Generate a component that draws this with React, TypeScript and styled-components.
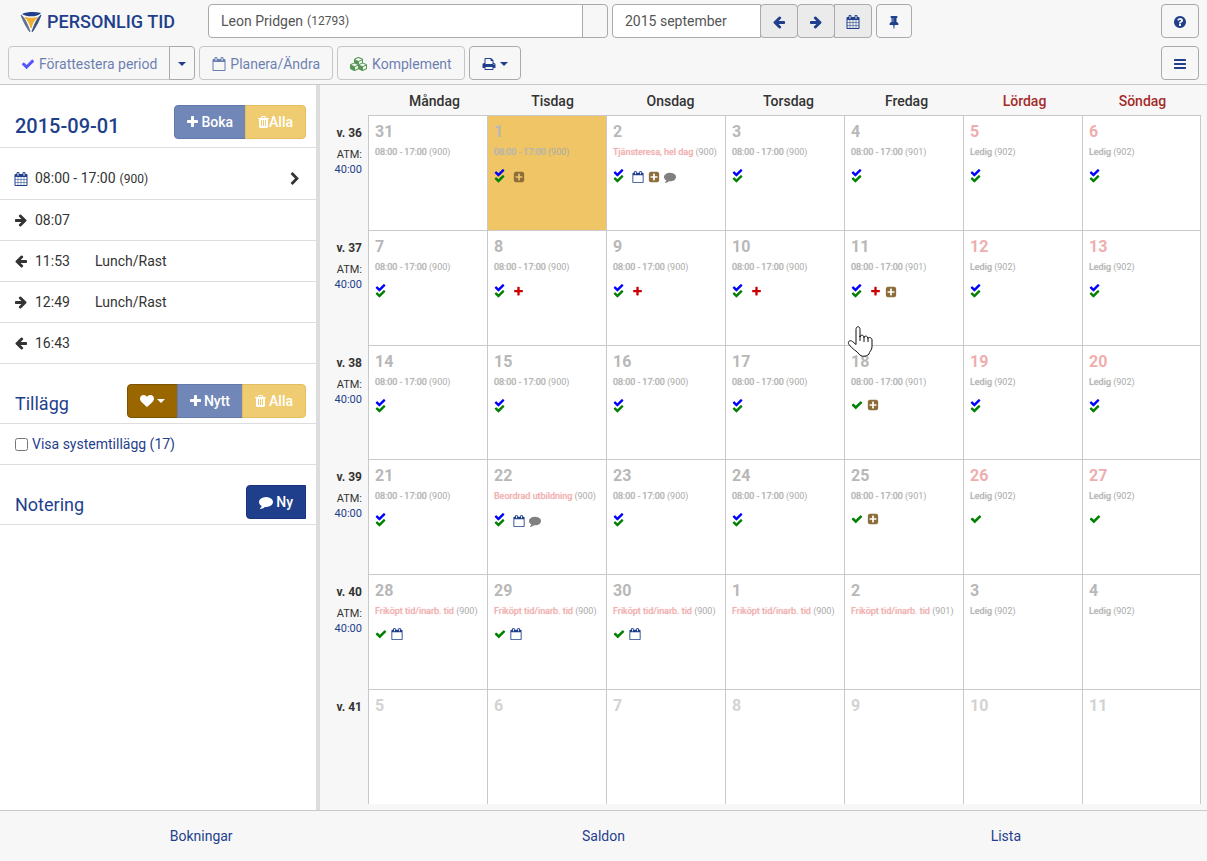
import React from "react";
import styled, { createGlobalStyle } from "styled-components";

const NAVY = "#1f3f8c";
const LINE = "#c9c9c9";

const GlobalStyle = createGlobalStyle`
  *, *::before, *::after { box-sizing: border-box; }
  body {
    margin: 0;
    background: #f7f7f7;
    color: #333;
    font: 14px/20px Roboto, "Liberation Sans", sans-serif;
  }
  button, input { font: inherit; color: inherit; }
  a { color: ${NAVY}; text-decoration: none; }
`;

/* ---------- icons ---------- */

const paths = {
  check:
    "M1671 566q0 40-28 68l-724 724-136 136q-28 28-68 28t-68-28l-136-136-362-362q-28-28-28-68t28-68l136-136q28-28 68-28t68 28l294 295 656-657q28-28 68-28t68 28l136 136q28 28 28 68z",
  arrowRight:
    "M1600 960q0 54-37 91l-651 651q-39 37-91 37-51 0-90-37l-75-75q-38-38-38-91t38-91l293-293h-704q-52 0-84.500-37.500t-32.500-90.500v-128q0-53 32.500-90.500t84.500-37.500h704l-293-294q-38-36-38-90t38-90l75-75q38-38 90-38 53 0 91 38l651 651q37 35 37 90z",
  arrowLeft:
    "M1664 896v128q0 53-32.500 90.500t-84.500 37.500h-704l293 294q38 36 38 90t-38 90l-75 76q-37 37-90 37-52 0-91-37l-651-652q-37-37-37-90 0-52 37-91l651-650q38-38 91-38 52 0 90 38l75 74q38 38 38 91t-38 91l-293 293h704q52 0 84.500 37.500t32.500 90.500z",
  calendar:
    "M192 1664h288v-288h-288v288zm352 0h320v-288h-320v288zm-352-352h288v-320h-288v320zm352 0h320v-320h-320v320zm-352-384h288v-288h-288v288zm736 736h320v-288h-320v288zm-384-736h320v-288h-320v288zm768 736h288v-288h-288v288zm-384-352h320v-320h-320v320zm-352-864v-288q0-13-9.500-22.500t-22.500-9.500h-64q-13 0-22.500 9.500t-9.500 22.500v288q0 13 9.500 22.500t22.500 9.500h64q13 0 22.500-9.500t9.500-22.500zm736 864h288v-320h-288v320zm-384-384h320v-288h-320v288zm384 0h288v-288h-288v288zm32-480v-288q0-13-9.500-22.500t-22.500-9.500h-64q-13 0-22.500 9.500t-9.500 22.500v288q0 13 9.500 22.500t22.500 9.500h64q13 0 22.500-9.500t9.500-22.500zm384-64v1280q0 52-38 90t-90 38h-1408q-52 0-90-38t-38-90v-1280q0-52 38-90t90-38h128v-96q0-66 47-113t113-47h64q66 0 113 47t47 113v96h384v-96q0-66 47-113t113-47h64q66 0 113 47t47 113v96h128q52 0 90 38t38 90z",
  calendarEmpty:
    "M192 1664h1408v-1024h-1408v1024zm384-1216v-288q0-13-9.500-22.500t-22.500-9.500h-64q-13 0-22.500 9.500t-9.500 22.500v288q0 13 9.500 22.500t22.500 9.500h64q13 0 22.500-9.500t9.500-22.500zm768 0v-288q0-13-9.500-22.500t-22.500-9.500h-64q-13 0-22.500 9.500t-9.500 22.500v288q0 13 9.500 22.500t22.500 9.500h64q13 0 22.500-9.500t9.500-22.500zm384-64v1280q0 52-38 90t-90 38h-1408q-52 0-90-38t-38-90v-1280q0-52 38-90t90-38h128v-96q0-66 47-113t113-47h64q66 0 113 47t47 113v96h384v-96q0-66 47-113t113-47h64q66 0 113 47t47 113v96h128q52 0 90 38t38 90z",
  plus:
    "M1600 736v192q0 40-28 68t-68 28h-416v416q0 40-28 68t-68 28h-192q-40 0-68-28t-28-68v-416h-416q-40 0-68-28t-28-68v-192q0-40 28-68t68-28h416v-416q0-40 28-68t68-28h192q40 0 68 28t28 68v416h416q40 0 68 28t28 68z",
  plusSquare:
    "M1408 960v-128q0-26-19-45t-45-19h-320v-320q0-26-19-45t-45-19h-128q-26 0-45 19t-19 45v320h-320q-26 0-45 19t-19 45v128q0 26 19 45t45 19h320v320q0 26 19 45t45 19h128q26 0 45-19t19-45v-320h320q26 0 45-19t19-45zm256-544v960q0 119-84.500 203.500t-203.500 84.500h-960q-119 0-203.500-84.500t-84.500-203.500v-960q0-119 84.500-203.500t203.500-84.500h960q119 0 203.500 84.500t84.500 203.500z",
  comment:
    "M1792 896q0 174-120 321.500t-326 233-450 85.500q-70 0-145-8-198 175-460 242-49 14-114 22-17 2-30.500-9t-17.500-29v-1q-3-4-.5-12t2-10 4.500-9.500l6-9 7-8.500 8-9q7-8 31-34.500t34.500-38 31-39.500 32.500-51 27-59 26-76q-157-89-247.500-220t-90.500-281q0-130 71-248.500t191-204.500 286-136.500 348-50.500q244 0 450 85.500t326 233 120 321.500z",
  trash:
    "M704 1376v-704q0-14-9-23t-23-9h-64q-14 0-23 9t-9 23v704q0 14 9 23t23 9h64q14 0 23-9t9-23zm256 0v-704q0-14-9-23t-23-9h-64q-14 0-23 9t-9 23v704q0 14 9 23t23 9h64q14 0 23-9t9-23zm256 0v-704q0-14-9-23t-23-9h-64q-14 0-23 9t-9 23v704q0 14 9 23t23 9h64q14 0 23-9t9-23zm-544-992h448l-48-117q-7-9-17-11h-317q-10 2-17 11zm928 32v64q0 14-9 23t-23 9h-96v948q0 83-47 143.500t-113 60.500h-832q-66 0-113-58.500t-47-141.500v-952h-96q-14 0-23-9t-9-23v-64q0-14 9-23t23-9h309l70-167q15-37 54-63t79-26h320q40 0 79 26t54 63l70 167h309q14 0 23 9t9 23z",
  chevronRight:
    "M1363 877l-742 742q-19 19-45 19t-45-19l-166-166q-19-19-19-45t19-45l531-531-531-531q-19-19-19-45t19-45l166-166q19-19 45-19t45 19l742 742q19 19 19 45t-19 45z",
  bars:
    "M1664 1344v128q0 26-19 45t-45 19h-1408q-26 0-45-19t-19-45v-128q0-26 19-45t45-19h1408q26 0 45 19t19 45zm0-512v128q0 26-19 45t-45 19h-1408q-26 0-45-19t-19-45v-128q0-26 19-45t45-19h1408q26 0 45 19t19 45zm0-512v128q0 26-19 45t-45 19h-1408q-26 0-45-19t-19-45v-128q0-26 19-45t45-19h1408q26 0 45 19t19 45z",
  question:
    "M1024 1376v-192q0-14-9-23t-23-9h-192q-14 0-23 9t-9 23v192q0 14 9 23t23 9h192q14 0 23-9t9-23zm256-672q0-88-55.500-163t-138.500-116-170-41q-243 0-371 213-15 24 8 42l132 100q7 6 19 6 16 0 25-12 53-68 86-92 34-24 86-24 48 0 85.500 26t37.500 59q0 38-20 61t-68 45q-63 28-115.500 86.500t-52.500 125.500v36q0 14 9 23t23 9h192q14 0 23-9t9-23q0-19 21.500-49.500t54.500-49.500q32-18 49-28.500t46-35 44.500-48 28-60.500 12.500-81zm384 192q0 209-103 385.500t-279.500 279.500-385.500 103-385.500-103-279.500-279.500-103-385.500 103-385.500 279.500-279.500 385.500-103 385.500 103 279.500 279.500 103 385.500z",
  print:
    "M448 1536h896v-256h-896v256zm0-640h896v-384h-160q-40 0-68-28t-28-68v-160h-640v640zm1152 64q0-26-19-45t-45-19-45 19-19 45 19 45 45 19 45-19 19-45zm128 0v416q0 13-9.500 22.500t-22.500 9.500h-224v160q0 40-28 68t-68 28h-960q-40 0-68-28t-28-68v-160h-224q-13 0-22.500-9.500t-9.500-22.500v-416q0-79 56.500-135.500t135.500-56.500h64v-544q0-40 28-68t68-28h672q40 0 88 20t76 48l152 152q28 28 48 76t20 88v256h64q79 0 135.500 56.500t56.500 135.500z",
  pin:
    "M800 864v-448q0-14-9-23t-23-9-23 9-9 23v448q0 14 9 23t23 9 23-9 9-23zm672 352q0 26-19 45t-45 19h-429l-51 483q-2 12-10.500 20.500t-20.500 8.500h-1q-27 0-32-27l-76-485h-404q-26 0-45-19t-19-45q0-123 78.500-221.500t177.500-98.500v-512q-52 0-90-38t-38-90 38-90 90-38h640q52 0 90 38t38 90-38 90-90 38v512q99 0 177.500 98.500t78.500 221.500z",
  heart:
    "M896 1664q-26 0-44-18l-624-602q-10-8-27.500-26t-55.500-65.500-68-97.500-53.500-121-23.500-138q0-220 127-344t351-124q62 0 126.500 21.500t120 58 95.500 68.500 76 68q36-36 76-68t95.500-68.500 120-58 126.500-21.500q224 0 351 124t127 344q0 221-229 450l-623 600q-18 18-44 18z",
  cubes:
    "M640 1632l384-192v-314l-384 164v342zm-64-454l404-173-404-173-404 173zm1088 454l384-192v-314l-384 164v342zm-64-454l404-173-404-173-404 173zm-448-293l384-165v-266l-384 164v267zm-64-379l441-189-441-189-441 189zm1088 518v416q0 36-19 67t-52 47l-448 224q-25 14-57 14t-57-14l-448-224q-4-2-7-4-2 2-7 4l-448 224q-25 14-57 14t-57-14l-448-224q-33-16-52-47t-19-67v-416q0-38 21.500-70t56.500-48l434-186v-400q0-38 21.500-70t56.500-48l448-192q23-10 50-10t50 10l448 192q35 16 56.500 48t21.500 70v400l434 186q36 16 57 48t21 70z",
};

type IconName = keyof typeof paths;

const Svg = styled.svg`
  display: block;
  flex: none;
  fill: currentColor;
`;

function Icon({ name, size = 14, narrow, color }: { name: IconName; size?: number; narrow?: boolean; color?: string }) {
  const wide = name === "cubes";
  const viewBox = wide ? "0 0 2304 1792" : narrow ? "192 0 1408 1792" : "0 0 1792 1792";
  return (
    <Svg
      width={wide ? size + 4 : narrow ? size - 3 : size}
      height={size}
      viewBox={viewBox}
      color={color}
      aria-hidden="true"
    >
      <path d={paths[name]} />
    </Svg>
  );
}

const Caret = styled.span`
  border: 4px solid transparent;
  border-top-color: currentColor;
  border-bottom: 0;
`;

const DoubleCheckBox = styled(Svg)`
  align-self: flex-start;
`;

function DoubleCheck() {
  return (
    <DoubleCheckBox width="15" height="15" viewBox="0 0 15 15" role="img" aria-label="Attesterad">
      <g transform="translate(0 -1) scale(0.0062)" fill="#00f">
        <path d={paths.check} />
      </g>
      <g transform="translate(0 5) scale(0.0062)" fill="green">
        <path d={paths.check} />
      </g>
    </DoubleCheckBox>
  );
}

/* ---------- header ---------- */

const Page = styled.div`
  min-height: 100vh;
  display: flex;
  flex-direction: column;
`;

const Header = styled.header`
  display: flex;
  flex-direction: column;
  gap: 8px;
  padding: 4px 8px;
  border-bottom: 1px solid ${LINE};
`;

const Bar = styled.div`
  display: flex;
  gap: 4px;
`;

const Logo = styled.h1`
  display: flex;
  align-items: center;
  gap: 5px;
  width: 196px;
  margin: 0;
  padding: 2px 0 0 12px;
  font-size: 18px;
  line-height: 32px;
  font-weight: 500;
  color: ${NAVY};
  white-space: nowrap;
`;

const Group = styled.div<{ $width?: string }>`
  display: flex;
  width: ${(p) => p.$width ?? "auto"};
  & > * { border-radius: 0; }
  & > * + * { margin-left: -1px; }
  & > :last-child { border-radius: 0 4px 4px 0; }
  & > :first-child { border-radius: 4px 0 0 4px; }
`;

const PersonField = styled.div`
  flex: 1;
  display: flex;
  align-items: center;
  height: 34px;
  padding: 0 12px;
  background: #fff;
  border: 1px solid #aaa;
  color: #555;
`;

const Field = styled.input`
  flex: 1;
  min-width: 0;
  height: 34px;
  padding: 0 12px;
  background: #fff;
  border: 1px solid #aaa;
  color: #555;
`;

const Button = styled.button<{ $shade?: boolean; $pad?: number; $muted?: boolean }>`
  display: flex;
  align-items: center;
  justify-content: center;
  gap: 4px;
  height: 34px;
  padding: 2px ${(p) => p.$pad ?? 12}px 0;
  background: ${(p) => (p.$shade ? "#ebebeb" : "#f7f7f7")};
  border: 1px solid ${(p) => (p.$muted ? "#c6c6c6" : "#aaa")};
  border-radius: 4px;
  color: ${NAVY};
  white-space: nowrap;
  & > * { opacity: ${(p) => (p.$muted ? 0.65 : 1)}; }
`;

const Spacer = styled.div`
  flex: 1;
`;

const Small = styled.small`
  margin-left: 4px;
  font-size: 12px;
`;

/* ---------- sidebar ---------- */

const Body = styled.div`
  flex: 1;
  display: flex;
`;

const Side = styled.aside`
  flex: none;
  width: 320px;
  background: #fff;
  border-right: 4px solid #ddd;
`;

const SideHead = styled.div<{ $bottom?: number }>`
  display: flex;
  justify-content: space-between;
  padding: 20px 10px ${(p) => p.$bottom ?? 5}px 15px;
  border-bottom: 1px solid #ddd;
`;

const SideTitle = styled.h2<{ $strong?: boolean }>`
  margin: 0;
  padding-top: ${(p) => (p.$strong ? 8 : 6)}px;
  font-size: ${(p) => (p.$strong ? 20 : 18)}px;
  line-height: ${(p) => (p.$strong ? 26 : 28)}px;
  font-weight: ${(p) => (p.$strong ? 500 : 400)};
  color: ${NAVY};
`;

const Action = styled.button<{ $bg: string; $edge: string; $gap?: number }>`
  display: flex;
  align-items: center;
  gap: ${(p) => p.$gap ?? 3}px;
  height: 34px;
  padding: 0 12px;
  background: ${(p) => p.$bg};
  border: 1px solid ${(p) => p.$edge};
  color: #fff;
  font-weight: 500;
`;

const SideRow = styled.div<{ $first?: boolean }>`
  display: flex;
  align-items: center;
  gap: 7px;
  padding: ${(p) => (p.$first ? 20 : 10)}px 14px 10px;
  border-bottom: 1px solid #ddd;
`;

const Stamp = styled.time`
  width: 53px;
`;

const CheckLabel = styled.label`
  display: flex;
  align-items: center;
  gap: 4px;
  color: ${NAVY};
`;

const CheckInput = styled.input`
  width: 13px;
  height: 13px;
  margin: 0 0 0 1px;
`;

/* ---------- calendar ---------- */

const Main = styled.main`
  flex: 1;
  padding: 0 6px 6px 0;
`;

const Calendar = styled.table`
  width: 100%;
  table-layout: fixed;
  border-collapse: separate;
  border-spacing: 0;
`;

const DayName = styled.th<{ $col: number }>`
  height: 30px;
  padding: 2px 0 0 ${(p) => 14 - 2 * p.$col}px;
  font-weight: 500;
  color: ${(p) => (p.$col > 4 ? "brown" : "#333")};
`;

const WeekHead = styled.th`
  width: 48px;
  padding: 0;
`;

const WeekCell = styled.th`
  padding: 8px 6px 0 0;
  vertical-align: top;
  text-align: right;
  font-size: 12px;
  line-height: 20px;
  font-weight: 400;
`;

const WeekNo = styled.div`
  font-weight: 700;
`;

const Atm = styled.div`
  padding-top: 4px;
  font-size: 11px;
  line-height: 15px;
  a { display: block; }
`;

const DayCell = styled.td<{ $selected?: boolean }>`
  position: relative;
  height: calc((100vh - 172px) / 6);
  padding: 6px 0 0 6px;
  vertical-align: top;
  background: ${(p) => (p.$selected ? "#efc565" : "#fff")};
  border: solid ${LINE};
  border-width: 1px 0 0 1px;
  &:last-child { border-right-width: 1px; }
`;

const DayNo = styled.div<{ $tone: string }>`
  font-size: 16px;
  font-weight: 700;
  color: ${(p) => p.$tone};
`;

const Shift = styled.div<{ $tone: string }>`
  font-size: 9px;
  color: #aaa;
  white-space: nowrap;
  b {
    font-weight: 400;
    color: ${(p) => p.$tone};
    text-shadow: 0 0 1px currentColor;
  }
`;

const Marks = styled.div<{ $single: boolean }>`
  display: flex;
  align-items: center;
  gap: 4px;
  height: ${(p) => (p.$single ? 14 : 18)}px;
  margin-top: 6px;
`;

const Hand = styled.svg`
  position: absolute;
  z-index: 1;
  left: 2px;
  top: 94px;
`;

/* D double check, C single check, o calendar, p plus square, m comment, r red plus */
type Day = { n: number; text?: string; code?: number; marks?: string; red?: boolean };

const work = (n: number, marks?: string, code = 900): Day => ({ n, text: "08:00 - 17:00", code, marks });
const free = (n: number, marks?: string): Day => ({ n, text: "Ledig", code: 902, marks });
const away = (n: number, text: string, marks?: string, code = 900): Day => ({ n, text, code, marks, red: true });
const BOUGHT = "Friköpt tid/inarb. tid";

const weeks: { no: number; days: Day[] }[] = [
  { no: 36, days: [work(31), work(1, "Dp"), away(2, "Tjänsteresa, hel dag", "Dopm"), work(3, "D"), work(4, "D", 901), free(5, "D"), free(6, "D")] },
  { no: 37, days: [work(7, "D"), work(8, "Dr"), work(9, "Dr"), work(10, "Dr"), work(11, "Drp", 901), free(12, "D"), free(13, "D")] },
  { no: 38, days: [work(14, "D"), work(15, "D"), work(16, "D"), work(17, "D"), work(18, "Cp", 901), free(19, "D"), free(20, "D")] },
  { no: 39, days: [work(21, "D"), away(22, "Beordrad utbildning", "Dom"), work(23, "D"), work(24, "D"), work(25, "Cp", 901), free(26, "C"), free(27, "C")] },
  { no: 40, days: [away(28, BOUGHT, "Co"), away(29, BOUGHT, "Co"), away(30, BOUGHT, "Co"), away(1, BOUGHT), away(2, BOUGHT, "", 901), free(3), free(4)] },
  { no: 41, days: [5, 6, 7, 8, 9, 10, 11].map((n) => ({ n })) },
];

const dayNames = ["Måndag", "Tisdag", "Onsdag", "Torsdag", "Fredag", "Lördag", "Söndag"];

function Mark({ kind }: { kind: string }) {
  switch (kind) {
    case "D":
      return <DoubleCheck />;
    case "C":
      return <Icon name="check" size={12} color="green" />;
    case "o":
      return <Icon name="calendarEmpty" size={12} color={NAVY} />;
    case "p":
      return <Icon name="plusSquare" size={12} color="#8d6d3b" />;
    case "m":
      return <Icon name="comment" size={12} color="#808080" />;
    default:
      return <Icon name="plus" size={11} color="#c00" />;
  }
}

function dayTone(week: number, col: number) {
  if (week === 41) return "#d3d3d3";
  return week < 40 && col > 4 ? "#efaeae" : "#b8b8b8";
}

function DayBox({ day, week, col }: { day: Day; week: number; col: number }) {
  return (
    <DayCell $selected={week === 36 && day.n === 1}>
      <DayNo $tone={dayTone(week, col)}>{day.n}</DayNo>
      {day.text && (
        <Shift $tone={day.red ? "#efaeae" : "#b4b4b4"}>
          <b>{day.text}</b> ({day.code})
        </Shift>
      )}
      {day.marks && (
        <Marks $single={day.marks[0] === "C"}>
          {day.marks.split("").map((m) => (
            <Mark key={m} kind={m} />
          ))}
        </Marks>
      )}
      {week === 37 && day.n === 11 && (
        <Hand width="26" height="33" viewBox="0 0 26 33" aria-hidden="true">
          <path
            d="M9 18V4.500C9 .800 13 .800 13 4.500V12C13 9.500 17 9.500 17 12.500C17 10.500 21 10.500 21 13.500C21 12 25 12 25 15V22C25 25 22 27 22 29C19 32 14 32 12 29C10 26 5 24 2 19.500C0 16.500 3 14.500 5.500 16.500L9 19.500Z"
            fill="#fff"
            stroke="#111"
            strokeLinejoin="round"
          />
          <path d="M13 11V16M17 12V17M21 13V17" stroke="#111" />
        </Hand>
      )}
    </DayCell>
  );
}

/* ---------- footer ---------- */

const Footer = styled.nav`
  display: flex;
  border-top: 1px solid ${LINE};
  a {
    flex: 1;
    padding: 15px 0;
    text-align: center;
  }
`;

const BLUE = { $bg: "#7187b7", $edge: "#6179ad" };
const GOLD = { $bg: "#efcc72", $edge: "#e3bd60" };

export default function App() {
  return (
    <Page>
      <GlobalStyle />
      <Header>
        <Bar>
          <Logo>
            <svg width="22" height="20" viewBox="0 0 22 20" aria-hidden="true">
              <path d="M1 3C4 5 7 11 10 19.500H9.500C7 16 3 9 1 3Z" fill="#5d6f93" stroke="#5d6f93" />
              <path d="M21 3C18 5 15 11 12 19.500H12.500C15 16 19 9 21 3Z" fill="#39517f" stroke="#39517f" />
              <path d="M2 2C7 -.3 15 -.5 21 1C18 5 7 5.500 2 2Z" fill={NAVY} />
              <path d="M5 5.500C9 6.500 14 6.500 17 5.500C14 8 12 12 11 16C10 12 8 8 5 5.500Z" fill="#f0ae2d" stroke="#f0ae2d" />
            </svg>
            PERSONLIG TID
          </Logo>
          <Group $width="400px">
            <PersonField>
              Leon Pridgen <Small>(12793)</Small>
            </PersonField>
            <Button aria-label="Välj person" />
          </Group>
          <Group $width="260px">
            <Field aria-label="Period" defaultValue="2015 september" />
            <Button $shade $pad={11} aria-label="Föregående"><Icon name="arrowLeft" /></Button>
            <Button $shade $pad={11} aria-label="Nästa"><Icon name="arrowRight" /></Button>
            <Button $shade $pad={11} aria-label="Kalender"><Icon name="calendar" /></Button>
          </Group>
          <Button $pad={10} aria-label="Fäst"><Icon name="pin" /></Button>
          <Spacer />
          <Button $pad={11} aria-label="Hjälp"><Icon name="question" /></Button>
        </Bar>
        <Bar>
          <Group>
            <Button $muted>
              <Icon name="check" color="#00f" />
              <span>Förattestera period</span>
            </Button>
            <Button $pad={8} aria-label="Fler val"><Caret /></Button>
          </Group>
          <Button $muted>
            <Icon name="calendarEmpty" />
            <span>Planera/Ändra</span>
          </Button>
          <Button $muted>
            <Icon name="cubes" color="#060" />
            <span>Komplement</span>
          </Button>
          <Button aria-label="Skriv ut">
            <Icon name="print" />
            <Caret />
          </Button>
          <Spacer />
          <Button $pad={11} aria-label="Meny"><Icon name="bars" /></Button>
        </Bar>
      </Header>

      <Body>
        <Side>
          <SideHead $bottom={8}>
            <SideTitle $strong>2015-09-01</SideTitle>
            <Group>
              <Action {...BLUE}><Icon name="plus" narrow />Boka</Action>
              <Action {...GOLD} $gap={0}><Icon name="trash" narrow />Alla</Action>
            </Group>
          </SideHead>
          <SideRow $first>
            <Icon name="calendar" color={NAVY} />
            <span>08:00 - 17:00<Small>(900)</Small></span>
            <Spacer />
            <Icon name="chevronRight" />
          </SideRow>
          <SideRow><Icon name="arrowRight" /><Stamp>08:07</Stamp></SideRow>
          <SideRow><Icon name="arrowLeft" /><Stamp>11:53</Stamp>Lunch/Rast</SideRow>
          <SideRow><Icon name="arrowRight" /><Stamp>12:49</Stamp>Lunch/Rast</SideRow>
          <SideRow><Icon name="arrowLeft" /><Stamp>16:43</Stamp></SideRow>
          <SideHead>
            <SideTitle>Tillägg</SideTitle>
            <Group>
              <Action $bg="#960" $edge="#7d5300" aria-label="Favoriter">
                <Icon name="heart" />
                <Caret />
              </Action>
              <Action {...BLUE}><Icon name="plus" narrow />Nytt</Action>
              <Action {...GOLD}><Icon name="trash" narrow />Alla</Action>
            </Group>
          </SideHead>
          <SideRow>
            <CheckLabel>
              <CheckInput type="checkbox" />
              Visa systemtillägg (17)
            </CheckLabel>
          </SideRow>
          <SideHead>
            <SideTitle>Notering</SideTitle>
            <Group>
              <Action $bg={NAVY} $edge="#18347a"><Icon name="comment" />Ny</Action>
            </Group>
          </SideHead>
        </Side>

        <Main>
          <Calendar>
            <thead>
              <tr>
                <WeekHead aria-label="Vecka" />
                {dayNames.map((name, i) => (
                  <DayName key={name} scope="col" $col={i}>{name}</DayName>
                ))}
              </tr>
            </thead>
            <tbody>
              {weeks.map((week) => (
                <tr key={week.no}>
                  <WeekCell scope="row">
                    <WeekNo>v. {week.no}</WeekNo>
                    {week.no < 41 && (
                      <Atm>
                        ATM: <a href="#atm">40:00</a>
                      </Atm>
                    )}
                  </WeekCell>
                  {week.days.map((day, col) => (
                    <DayBox key={day.n} day={day} week={week.no} col={col} />
                  ))}
                </tr>
              ))}
            </tbody>
          </Calendar>
        </Main>
      </Body>

      <Footer>
        <a href="#bokningar">Bokningar</a>
        <a href="#saldon">Saldon</a>
        <a href="#lista">Lista</a>
      </Footer>
    </Page>
  );
}
